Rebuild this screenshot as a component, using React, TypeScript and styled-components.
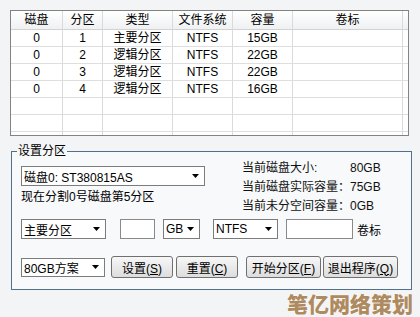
import React from 'react';
import styled, { createGlobalStyle } from 'styled-components';

const GlobalStyle = createGlobalStyle`
  html, body {
    margin: 0;
    padding: 0;
    background: #f3f4f5;
  }
  body {
    font-family: "Liberation Sans", "Noto Sans CJK SC", sans-serif;
    font-size: 12px;
    color: #000;
  }
`;

const Page = styled.div`
  position: relative;
  width: 420px;
  height: 317px;
  padding: 10px 0 0 10px;
  box-sizing: border-box;
  overflow: hidden;
`;

const Grid = styled.div`
  width: 399px;
  height: 126px;
  box-sizing: border-box;
  border: 1px solid #838383;
  background: #fff;
  overflow: hidden;
`;

const GridRow = styled.div<{ $head?: boolean }>`
  display: grid;
  grid-template-columns: 52px 40px 70px 60px 60px 110px 5px;
  height: ${(p) => (p.$head ? 19 : 17)}px;
  background: ${(p) => (p.$head ? 'linear-gradient(#ffffff, #eef0f2)' : '#fff')};
`;

const Cell = styled.div<{ $head?: boolean; $last?: boolean }>`
  box-sizing: border-box;
  display: flex;
  align-items: center;
  justify-content: center;
  border-right: ${(p) => (p.$last ? 'none' : '1px solid #dadada')};
  border-bottom: 1px solid ${(p) => (p.$head ? '#d2d2d2' : '#dedede')};
  line-height: 1;
  white-space: nowrap;
`;

const Group = styled.fieldset`
  margin: 8px 0 0 1px;
  width: 401px;
  box-sizing: border-box;
  border: 1px solid #53708a;
  padding: 0 0 11px 5px;
  background: #f7f9fa;
`;

const Legend = styled.legend`
  padding: 0 1px;
  line-height: 14px;
`;

const Body = styled.div`
  padding-left: 4px;
`;

const Top = styled.div`
  display: flex;
`;

const LeftCol = styled.div`
  width: 184px;
  padding-top: 8px;
  display: flex;
  flex-direction: column;
`;

const Note = styled.div`
  margin-top: 2px;
  line-height: 19px;
  white-space: nowrap;
`;

const Info = styled.div`
  margin-left: 37px;
  padding-top: 1px;
  display: grid;
  grid-template-columns: 108px auto;
  line-height: 19px;
  white-space: nowrap;
  color: #111;
`;

const Line = styled.div<{ $mt: number; $h: number }>`
  display: flex;
  align-items: center;
  margin-top: ${(p) => p.$mt}px;
  height: ${(p) => p.$h}px;
`;

const Combo = styled.div<{ $w: number; $ml?: number; $h?: number }>`
  width: ${(p) => p.$w}px;
  height: ${(p) => p.$h ?? 20}px;
  margin-left: ${(p) => p.$ml ?? 0}px;
  box-sizing: border-box;
  border: 1px solid #7c7c7c;
  background: #fff;
  display: flex;
  align-items: center;
  justify-content: space-between;
  padding: 0 5px 0 2px;
  white-space: nowrap;
  flex-shrink: 0;
`;

const TextBox = styled.div<{ $w: number; $ml: number }>`
  width: ${(p) => p.$w}px;
  height: 20px;
  margin-left: ${(p) => p.$ml}px;
  box-sizing: border-box;
  border: 1px solid #8a8a8a;
  background: #fff;
  flex-shrink: 0;
`;

const Label = styled.span<{ $ml: number }>`
  margin-left: ${(p) => p.$ml}px;
  white-space: nowrap;
`;

const Btn = styled.button<{ $w: number; $ml: number }>`
  width: ${(p) => p.$w}px;
  height: 22px;
  margin-left: ${(p) => p.$ml}px;
  padding: 0;
  box-sizing: border-box;
  border: 1px solid #707070;
  border-radius: 3px;
  background: linear-gradient(#f7f7f7, #dddddd);
  font: inherit;
  color: #000;
  white-space: nowrap;
  flex-shrink: 0;
`;

const Mark = styled.div`
  position: absolute;
  right: 7px;
  bottom: 2px;
  font-family: "Noto Sans CJK SC", sans-serif;
  font-weight: 900;
  font-size: 21px;
  line-height: 24px;
  letter-spacing: 0px;
  color: #ae8a60;
  text-shadow: 0 0 2px #fff, 0 0 1px #fff;
`;

const Arrow = () => (
  <svg width="7" height="4" viewBox="0 0 7 4">
    <path d="M0 0h7L3.5 4z" fill="#000" />
  </svg>
);

const columns = ['磁盘', '分区', '类型', '文件系统', '容量', '卷标', ''];
const rows = [
  ['0', '1', '主要分区', 'NTFS', '15GB', '', ''],
  ['0', '2', '逻辑分区', 'NTFS', '22GB', '', ''],
  ['0', '3', '逻辑分区', 'NTFS', '22GB', '', ''],
  ['0', '4', '逻辑分区', 'NTFS', '16GB', '', ''],
  ['', '', '', '', '', '', ''],
  ['', '', '', '', '', '', ''],
  ['', '', '', '', '', '', ''],
];

export default function App() {
  return (
    <Page>
      <GlobalStyle />
      <Grid>
        <GridRow $head>
          {columns.map((c, i) => (
            <Cell key={i} $head $last={i === columns.length - 1}>{c}</Cell>
          ))}
        </GridRow>
        {rows.map((r, ri) => (
          <GridRow key={ri}>
            {r.map((c, i) => (
              <Cell key={i} $last={i === r.length - 1}>{c}</Cell>
            ))}
          </GridRow>
        ))}
      </Grid>

      <Group>
        <Legend>设置分区</Legend>
        <Body>
          <Top>
            <LeftCol>
              <Combo $w={184}>
                <span>磁盘0: ST380815AS</span>
                <Arrow />
              </Combo>
              <Note>现在分割0号磁盘第5分区</Note>
            </LeftCol>
            <Info>
              <span>当前磁盘大小:</span>
              <span>80GB</span>
              <span>当前磁盘实际容量：</span>
              <span>75GB</span>
              <span>当前未分空间容量：</span>
              <span>0GB</span>
            </Info>
          </Top>

          <Line $mt={3} $h={20}>
            <Combo $w={85}>
              <span>主要分区</span>
              <Arrow />
            </Combo>
            <TextBox $w={35} $ml={14} />
            <Combo $w={37} $ml={8}>
              <span>GB</span>
              <Arrow />
            </Combo>
            <Combo $w={65} $ml={13}>
              <span>NTFS</span>
              <Arrow />
            </Combo>
            <TextBox $w={67} $ml={8} />
            <Label $ml={4}>卷标</Label>
          </Line>

          <Line $mt={17} $h={22}>
            <Combo $w={84} $h={19}>
              <span>80GB方案</span>
              <Arrow />
            </Combo>
            <Btn $w={62} $ml={6}>设置(<u>S</u>)</Btn>
            <Btn $w={62} $ml={3}>重置(<u>C</u>)</Btn>
            <Btn $w={75} $ml={8}>开始分区(<u>F</u>)</Btn>
            <Btn $w={75} $ml={2}>退出程序(<u>Q</u>)</Btn>
          </Line>
        </Body>
      </Group>

      <Mark>笔亿网络策划</Mark>
    </Page>
  );
}
